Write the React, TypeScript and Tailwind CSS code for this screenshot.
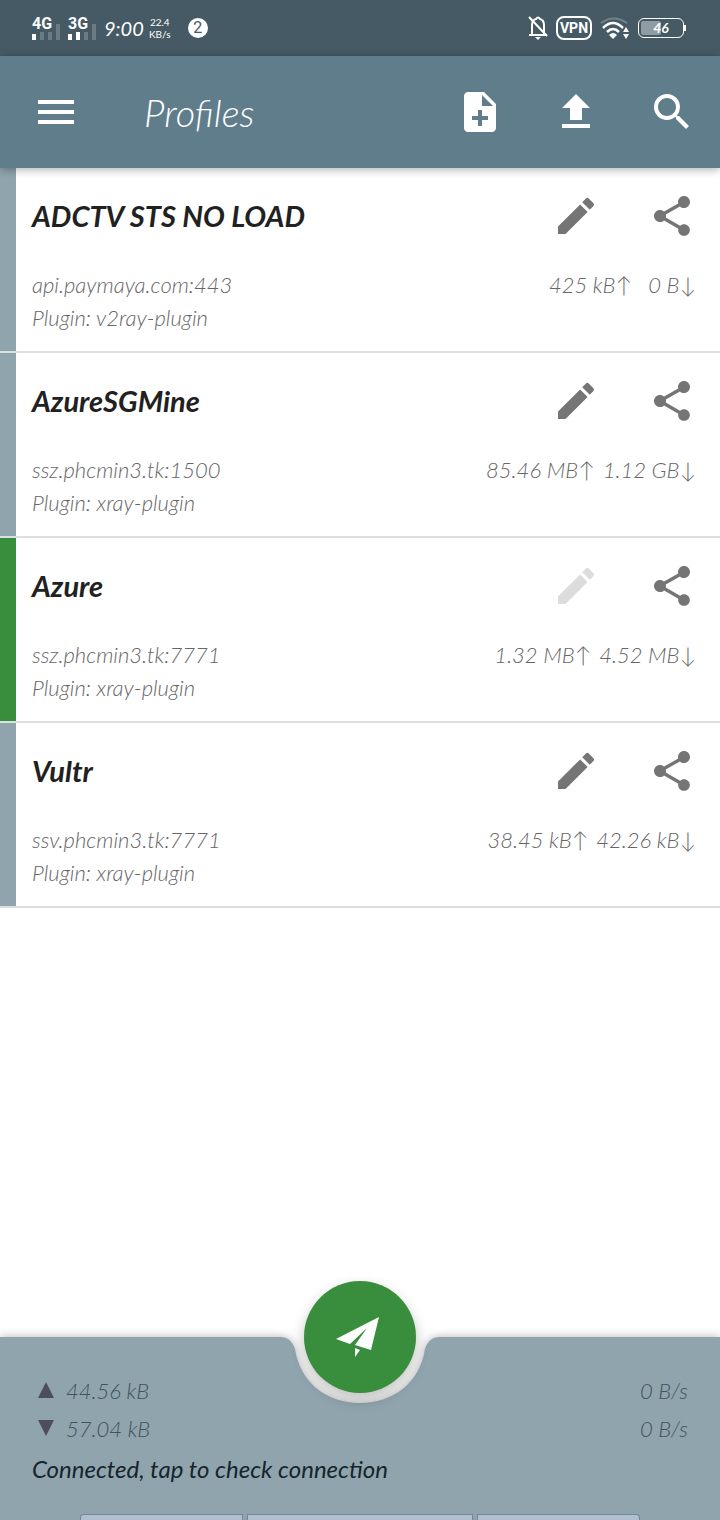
import { MdEdit, MdFileUpload, MdMenu, MdNoteAdd, MdSearch, MdShare } from 'react-icons/md'
import clsx from 'clsx'

interface Profile {
  name: string
  host: string
  plugin: string
  sent: string
  received: string
  active?: boolean
}

const profiles: Profile[] = [
  { name: 'ADCTV STS NO LOAD', host: 'api.paymaya.com:443', plugin: 'v2ray-plugin', sent: '425 kB↑', received: '0 B↓' },
  { name: 'AzureSGMine', host: 'ssz.phcmin3.tk:1500', plugin: 'xray-plugin', sent: '85.46 MB↑', received: '1.12 GB↓' },
  { name: 'Azure', host: 'ssz.phcmin3.tk:7771', plugin: 'xray-plugin', sent: '1.32 MB↑', received: '4.52 MB↓', active: true },
  { name: 'Vultr', host: 'ssv.phcmin3.tk:7771', plugin: 'xray-plugin', sent: '38.45 kB↑', received: '42.26 kB↓' },
]

function Signal({ label, level }: { label: string; level: number }) {
  return (
    <div className="w-7">
      <p className="font-['Roboto',sans-serif] text-base leading-4 font-bold">{label}</p>
      <svg viewBox="0 0 28 16" className="-mt-2 block h-4 w-7" fill="#fff">
        <rect x="0" y="10" width="4" height="6" />
        <rect x="8" y="8" width="4" height="8" opacity={level > 1 ? 1 : 0.2} />
        <rect x="16" y="8" width="4" height="8" opacity="0.2" />
        <rect x="24" y="0" width="4" height="16" opacity="0.2" />
      </svg>
    </div>
  )
}

function StatusBar() {
  return (
    <div className="flex h-14 items-center justify-between bg-[#455a64] pr-9 pl-8 text-white">
      <div className="flex items-center">
        <div className="flex gap-2">
          <Signal label="4G" level={1} />
          <Signal label="3G" level={2} />
        </div>
        <time className="ml-2 text-xl leading-8 italic">9:00</time>
        <p className="ml-1 w-6 text-center text-[10px] leading-3">
          22.4
          <br />
          KB/s
        </p>
        <span className="ml-4 flex size-5 items-center justify-center rounded-full bg-white font-['Roboto',sans-serif] text-base text-[#455a64]">
          2
        </span>
      </div>
      <div className="flex items-center">
        <svg viewBox="0 0 20 24" className="h-6 w-5" fill="none" stroke="#fff" strokeWidth="2">
          <path d="M4 18V9Q4 4 8 3Q10 0 12 3Q16 4 16 9v9M1 19h18" />
          <path d="M1 1l18 19" />
          <path d="M7 21h6l-3 3z" fill="#fff" stroke="none" />
        </svg>
        <span className="ml-2 flex h-6 w-9 items-center justify-center rounded-lg border-2 border-white font-['Roboto',sans-serif] text-sm font-bold">
          VPN
        </span>
        <svg viewBox="0 0 30 22" className="ml-2 h-[22px] w-[30px]" fill="none" stroke="#fff" strokeWidth="2.500">
          <path d="M1 6Q14-3 27 6" opacity="0.25" strokeWidth="2" />
          <path d="M3 11Q13 1 23 11" />
          <path d="M7 15Q13 9 19 15" />
          <path d="M9 18Q13 14 17 18l-4 4z" fill="#fff" stroke="none" />
          <path d="M23 15l3-5 3 5zM23 17h6l-3 5z" fill="#fff" stroke="none" />
        </svg>
        <div className="relative ml-2 flex h-5 w-[46px] items-center justify-center rounded-md border border-white text-sm">
          <div className="absolute inset-y-0.5 left-0.5 w-5 rounded-xs bg-white/40" />
          <span className="relative font-bold italic">46</span>
          <div className="absolute top-1.5 -right-[3px] h-1.5 w-0.5 bg-white" />
        </div>
      </div>
    </div>
  )
}

function AppBar() {
  return (
    <header className="relative z-10 flex h-28 items-center justify-between bg-[#607d8b] px-8 pr-6 text-white shadow-[0_2px_8px_rgba(0,0,0,0.3)]">
      <div className="flex items-center">
        <button type="button" aria-label="Menu">
          <MdMenu size={48} />
        </button>
        <h1 className="ml-16 text-[38px] leading-10 font-light italic">Profiles</h1>
      </div>
      <div className="flex gap-12">
        <button type="button" aria-label="Add profile">
          <MdNoteAdd size={48} />
        </button>
        <button type="button" aria-label="Export">
          <MdFileUpload size={48} />
        </button>
        <button type="button" aria-label="Search">
          <MdSearch size={48} />
        </button>
      </div>
    </header>
  )
}

function ProfileRow({ profile }: { profile: Profile }) {
  return (
    <li className="flex border-b-2 border-[#dcdee0]">
      <div className={clsx('w-4 shrink-0', profile.active ? 'bg-[#388e3c]' : 'bg-[#90a4ae]')} />
      <div className="flex-1 pt-6 pr-6 pb-[17px] pl-4">
        <div className="flex items-center justify-between">
          <h2 className="text-[29px] leading-10 font-bold text-[#212121] italic">{profile.name}</h2>
          <div className="flex gap-12 text-[#757575]">
            <button type="button" aria-label="Edit" disabled={profile.active} className="disabled:text-[#dcdcdc]">
              <MdEdit size={48} />
            </button>
            <button type="button" aria-label="Share">
              <MdShare size={48} />
            </button>
          </div>
        </div>
        <div className="mt-7 flex justify-between text-[22px] leading-[33px] font-light text-[#666] italic">
          <p>
            {profile.host}
            <br />
            Plugin: {profile.plugin}
          </p>
          <p className="flex">
            <span>{profile.sent}</span>
            <span className="min-w-16 pl-2 text-right">{profile.received}</span>
          </p>
        </div>
      </div>
    </li>
  )
}

function Footer() {
  return (
    <footer className="relative h-[183px] text-[22px] text-[#3f525d] italic">
      <div className="absolute inset-0 flex drop-shadow-[0_0_5px_rgba(0,0,0,0.3)]">
        <div className="flex-1 bg-[#90a4ae]" />
        <div className="flex w-40 flex-col">
          <svg viewBox="0 0 160 68" className="block h-[68px] w-40 shrink-0">
            <path
              d="M0 0C8 0 12 4 15 12C20 45 46 66 80 66S140 45 145 12C148 4 152 0 160 0V68H0z"
              fill="#90a4ae"
            />
          </svg>
          <div className="flex-1 bg-[#90a4ae]" />
        </div>
        <div className="flex-1 bg-[#90a4ae]" />
      </div>
      <button
        type="button"
        aria-label="Disconnect"
        className="absolute -top-14 left-1/2 flex size-28 -translate-x-1/2 items-center justify-center rounded-full bg-[#388e3c] shadow-[0_6px_14px_rgba(0,0,0,0.25)]"
      >
        <svg viewBox="0 0 48 48" className="size-12" fill="#fff">
          <path d="M43 4L0 26l14 5L31 15 19 32l16 5z" />
          <path d="M19 35l5 2-5 7z" />
        </svg>
      </button>
      <div className="relative flex h-full flex-col pt-[34px]">
        <div className="flex h-[38px] items-center px-8 font-light">
          <svg viewBox="0 0 16 16" className="ml-1.5 size-4" fill="#4c4e60">
            <path d="M8 0l8 16H0z" />
          </svg>
          <span className="ml-3">44.56 kB</span>
          <span className="ml-auto">0 B/s</span>
        </div>
        <div className="flex h-[38px] items-center px-8 font-light">
          <svg viewBox="0 0 16 16" className="ml-1.5 size-4" fill="#4c4e60">
            <path d="M0 0h16L8 16z" />
          </svg>
          <span className="ml-3">57.04 kB</span>
          <span className="ml-auto">0 B/s</span>
        </div>
        <p className="h-11 px-8 text-2xl leading-[44px] text-[#16242c]">Connected, tap to check connection</p>
        <div className="mx-20 mt-auto flex h-1.5 gap-1">
          <div className="flex-5 rounded-tl-sm border border-b-0 border-[#74879a] bg-[#b0bed0]" />
          <div className="flex-7 border border-b-0 border-[#74879a] bg-[#b0bed0]" />
          <div className="flex-5 rounded-tr-sm border border-b-0 border-[#74879a] bg-[#b0bed0]" />
        </div>
      </div>
    </footer>
  )
}

export default function App() {
  return (
    <div className="flex min-h-screen flex-col bg-white font-['Lato',sans-serif]">
      <StatusBar />
      <AppBar />
      <main className="flex-1">
        <ul>
          {profiles.map((profile) => (
            <ProfileRow key={profile.name} profile={profile} />
          ))}
        </ul>
      </main>
      <Footer />
    </div>
  )
}
